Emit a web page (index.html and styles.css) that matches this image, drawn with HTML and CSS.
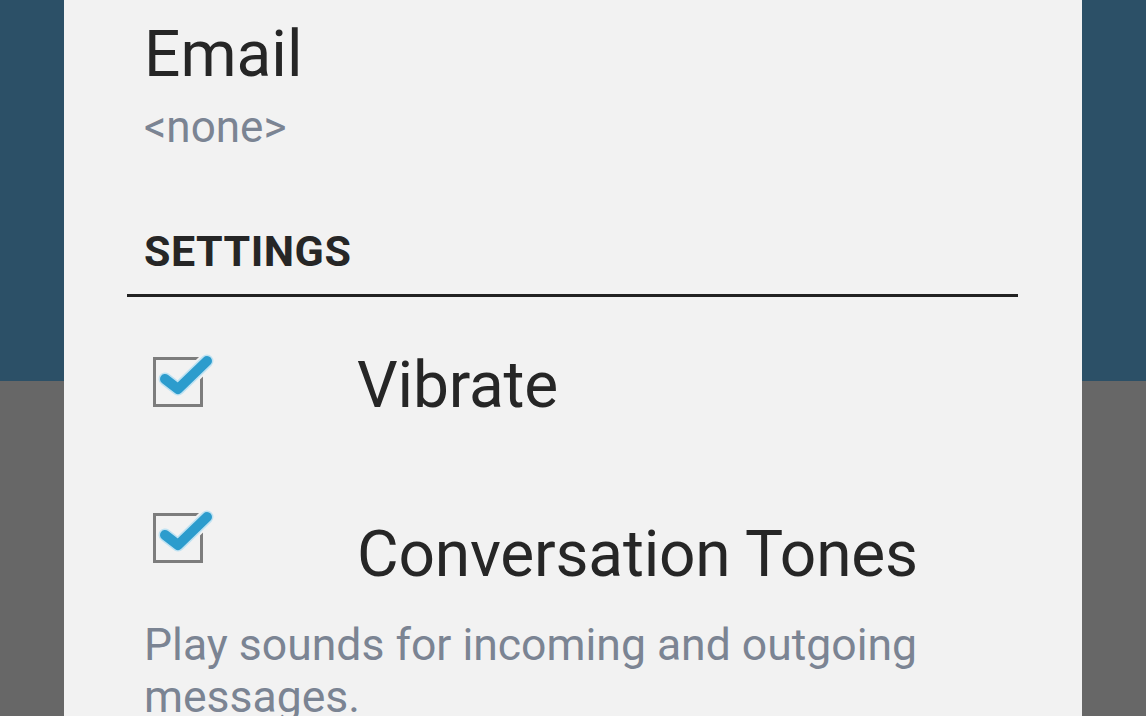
FILE: index.html
```html
<!DOCTYPE html>
<html>
	<head>
		<meta charset="UTF-8">
		<title>Contact settings</title>
		<link rel="stylesheet" href="styles.css">
	</head>
	<body>
		<div class="dialog">
			<div class="field-title">Email</div>
			<div class="field-value">&lt;none&gt;</div>

			<div class="category">SETTINGS</div>
			<div class="divider"></div>

			<div class="pref">
				<svg class="check" viewBox="0 0 50 50">
					<rect x="1.5" y="1.5" width="47" height="47" fill="none" stroke="#7d7d7d" stroke-width="3"/>
					<polyline points="12,22 25,32 54,4" fill="none" stroke="#f2f2f2" stroke-width="17" stroke-linecap="round" stroke-linejoin="round"/>
					<polyline points="12,22 25,32 54,4" fill="none" stroke="#bfe2f2" stroke-width="13" stroke-linecap="round" stroke-linejoin="round"/>
					<polyline points="12,22 25,32 54,4" fill="none" stroke="#2c9ccd" stroke-width="10" stroke-linecap="round" stroke-linejoin="round"/>
				</svg>
				<div class="pref-title">Vibrate</div>
			</div>

			<div class="pref pref-summary">
				<svg class="check" viewBox="0 0 50 50">
					<rect x="1.5" y="1.5" width="47" height="47" fill="none" stroke="#7d7d7d" stroke-width="3"/>
					<polyline points="12,22 25,32 54,4" fill="none" stroke="#f2f2f2" stroke-width="17" stroke-linecap="round" stroke-linejoin="round"/>
					<polyline points="12,22 25,32 54,4" fill="none" stroke="#bfe2f2" stroke-width="13" stroke-linecap="round" stroke-linejoin="round"/>
					<polyline points="12,22 25,32 54,4" fill="none" stroke="#2c9ccd" stroke-width="10" stroke-linecap="round" stroke-linejoin="round"/>
				</svg>
				<div class="pref-title">Conversation Tones</div>
			</div>
			<div class="summary">Play sounds for incoming and outgoing messages.</div>
		</div>
	</body>
</html>
```

FILE: styles.css
```css
*{
	padding: 0px;margin: 0px;
	box-sizing: border-box;
}
html,body{
	height: 100%;
}
body{
	background: linear-gradient(#2c5067 0px, #2c5067 381px, #676767 381px);
	font-family: Roboto, "Liberation Sans", sans-serif;
	overflow: hidden;
}
.dialog{
	width: 1018px;height: 100%;
	margin-left: 64px;
	padding: 23px 64px 0 80px;
	background: #f2f2f2;
	color: #262626;
}
.field-title{
	font-size: 64px;line-height: 64px;
}
.field-value{
	margin-top: 18px;
	font-size: 44px;line-height: 44px;
	color: #7b8493;
}
.category{
	margin-top: 81px;
	font-size: 43px;line-height: 43px;
	font-weight: bold;
	letter-spacing: 0.5px;
}
.divider{
	margin: 21px 0 0 -17px;
	height: 3px;
	background: #222;
}
.pref{
	display: flex;
	align-items: flex-start;
	gap: 154px;
	margin-top: 57px;
	padding-left: 9px;
}
.pref .check{
	width: 50px;height: 50px;
	flex-shrink: 0;
	overflow: visible;
	margin-top: 3px;
}
.pref-title{
	font-size: 64px;line-height: 64px;
	letter-spacing: -0.2px;
}
.pref-summary{
	margin-top: 95px;
}
.pref-summary .check{
	margin-top: 0px;
}
.pref-summary .pref-title{
	margin-top: 10px;
}
.summary{
	margin-top: 32px;
	font-size: 44.5px;line-height: 52px;
	color: #7b8493;
}
```
